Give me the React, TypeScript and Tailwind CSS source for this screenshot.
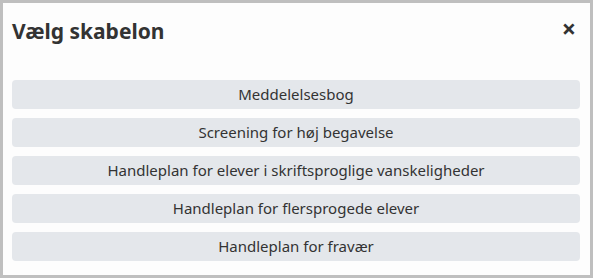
export default function App() {
  const items = [
    'Meddelelsesbog',
    'Screening for høj begavelse',
    'Handleplan for elever i skriftsproglige vanskeligheder',
    'Handleplan for flersprogede elever',
    'Handleplan for fravær',
  ];
  return (
    <div
      className="w-[593px] h-[278px] border-[3px] border-[#bfbfbf] bg-[#fdfdfd] text-[#333] flex flex-col"
      style={{ fontFamily: '"Noto Sans", "Open Sans", sans-serif' }}
    >
      <div className="flex items-center justify-between pl-[9px] pr-[14px] pt-[13px] h-[44px]">
        <h2 className="text-[21px] font-bold leading-none text-[#333]">Vælg skabelon</h2>
        <button className="text-[25px] font-bold leading-none text-[#333] mb-[6px]">×</button>
      </div>
      <div className="flex flex-col gap-[9px] pl-[9px] pr-[10px] pt-[33px]">
        {items.map(t => (
          <button
            key={t}
            className="h-[29px] w-full rounded-[4px] bg-[#e4e7eb] text-[15px] text-[#333] flex items-center justify-center"
          >
            {t}
          </button>
        ))}
      </div>
    </div>
  );
}
